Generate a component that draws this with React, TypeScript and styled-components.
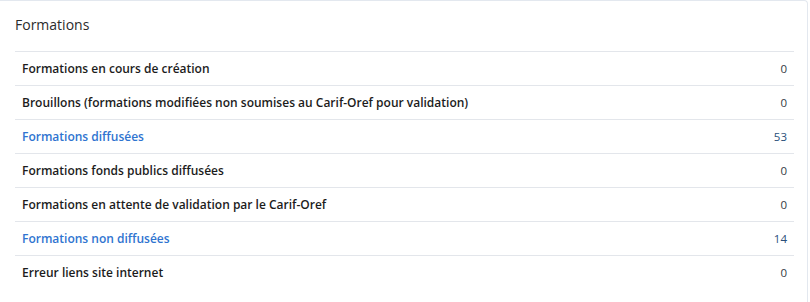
import React from 'react';
import styled, { createGlobalStyle } from 'styled-components';

const GlobalStyle = createGlobalStyle`
  html, body {
    margin: 0;
    padding: 0;
    background: #ffffff;
  }
  body {
    font-family: 'Open Sans', 'Liberation Sans', sans-serif;
  }
`;

type Row = {
  label: string;
  count: number;
  link?: boolean;
};

const rows: Row[] = [
  { label: 'Formations en cours de création', count: 0 },
  { label: 'Brouillons (formations modifiées non soumises au Carif-Oref pour validation)', count: 0 },
  { label: 'Formations diffusées', count: 53, link: true },
  { label: 'Formations fonds publics diffusées', count: 0 },
  { label: 'Formations en attente de validation par le Carif-Oref', count: 0 },
  { label: 'Formations non diffusées', count: 14, link: true },
  { label: 'Erreur liens site internet', count: 0 },
];

export default function App() {
  return (
    <>
      <GlobalStyle />
      <Card>
        <Title>Formations</Title>
        <Table>
          <tbody>
            {rows.map((row) => (
              <tr key={row.label}>
                <Label $link={row.link}>{row.label}</Label>
                <Count $link={row.link}>{row.count}</Count>
              </tr>
            ))}
          </tbody>
        </Table>
      </Card>
    </>
  );
}

const Card = styled.div`
  width: 808px;
  box-sizing: border-box;
  border-top: 1px solid #e3e8ef;
  border-right: 1px solid #e3e8ef;
  border-top-right-radius: 4px;
  padding: 13px 13px 20px 15px;
`;

const Title = styled.h5`
  margin: 0 0 15px;
  font-size: 14px;
  font-weight: 400;
  line-height: 22px;
  color: #2b2b2b;
`;

const Table = styled.table`
  width: 100%;
  border-collapse: collapse;

  td {
    border-top: 1px solid #e3e6eb;
    height: 33px;
    padding: 0 7px;
    vertical-align: middle;
  }
`;

const Label = styled.td<{ $link?: boolean }>`
  font-size: 12px;
  font-weight: 600;
  color: ${(p) => (p.$link ? '#2f74d0' : '#1c1c1c')};
`;

const Count = styled.td<{ $link?: boolean }>`
  text-align: right;
  font-size: 11.5px;
  color: ${(p) => (p.$link ? '#2a4f7a' : '#333a44')};
`;
